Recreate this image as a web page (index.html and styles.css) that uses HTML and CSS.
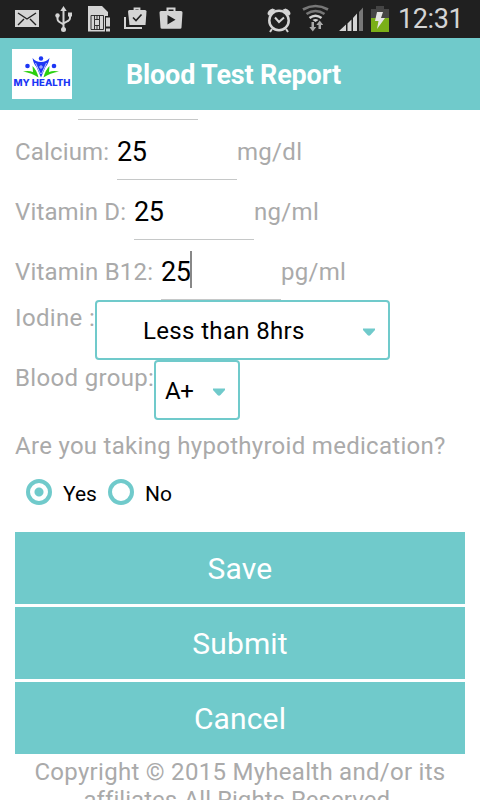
FILE: index.html
```html
<!DOCTYPE html>
<html lang="en">
<head>
<meta charset="utf-8">
<title>Blood Test Report</title>
<link rel="stylesheet" href="styles.css">
</head>
<body>
<div class="status">
<svg class="status-icons" width="392" height="38" viewBox="0 0 392 38" aria-hidden="true">
  <g fill="#d4d4d4">
    <path d="M15 10h24v17H15z"/>
    <path d="M18 13l9 6 9-6M18 25l6-6M36 25l-6-6" fill="none" stroke="#202020" stroke-width="1.4"/>
    <path d="M63.500 6l3.200 5h-6.400z"/><circle cx="63.500" cy="29.500" r="2.500"/><circle cx="57.500" cy="15.500" r="2.200"/><path d="M68 12.500h4v4h-4z"/>
    <path d="M63.500 9v20M57.500 15v4q0 2 2 3l4 2.500M70 15v3q0 2-2 3l-4.500 2.500" fill="none" stroke="#d4d4d4" stroke-width="2"/>
    <path d="M88 6h14l6 6v4h-3v15.500H88z"/>
    <path d="M91 15.500h12.500v14H91zM94.500 19.500v6h5v-6zM94.500 15.500v4M99.500 15.500v4M94.500 25.500v4M99.500 25.500v4M97 15.500v4M97 25.500v4" fill="none" stroke="#202020" stroke-width=".9"/>
    <path d="M106 17.500h4v9h-4zM106 28.500h4v3h-4z"/>
    <path d="M128 11.500q0-1.500 1.500-1.500h15.500q1.500 0 1.500 1.500L145.500 25h-16z"/><path d="M134.500 11V8.500h5V11" fill="none" stroke="#d4d4d4" stroke-width="1.800"/>
    <path d="M124 17h2v10h16v2h-18z"/><path d="M133 17.500l3 3 5.500-6" fill="none" stroke="#202020" stroke-width="1.600"/>
    <path d="M159.500 12.500q0-1.500 1.500-1.500h20q1.500 0 1.500 1.500l-1 15q0 1.200-1.500 1.200h-18q-1.500 0-1.500-1.200z"/><path d="M167.500 12V8.500h7V12" fill="none" stroke="#d4d4d4" stroke-width="2"/><path d="M167.500 15v9.500l8-4.700z" fill="#202020"/>
    <path d="M267.500 14q0-4 5-5.500l3 1.200-6.500 6zM290.500 14q0-4-5-5.500l-3 1.200 6.500 6z"/>
  </g>
  <circle cx="279" cy="20.500" r="9.700" fill="none" stroke="#d4d4d4" stroke-width="2.500"/>
  <path d="M275 17.500l4 4.500 5-4.500M272 29l-2 3M286 29l2 3" fill="none" stroke="#d4d4d4" stroke-width="2"/>
  <path d="M303 9.500q12.500-7 25 0M306.500 14q9-6 18 0" fill="none" stroke="#777" stroke-width="2.700"/>
  <path d="M309.500 18q6-4.500 12 0" fill="none" stroke="#d4d4d4" stroke-width="2.500"/><path d="M312.500 20q3-2 6 0l-3 2z" fill="#d4d4d4"/>
  <path d="M311.500 22h2.500v5h2.200l-3.400 4.500-3.500-4.500h2.200zM318.500 29h2.500v-4h2.200l-3.500-4.500-3.400 4.500h2.200z" fill="#aaa"/>
  <path d="M339 31l7-6.500V31zM347.500 23.500l4-4V31h-4zM353 18l4-4.500V31h-4z" fill="#d4d4d4"/><path d="M359 12l4-4.500V31h-4z" fill="#777"/>
  <path d="M371 9h5V6h8v3h5v9h-18z" fill="#454545"/><path d="M371 18h18v14h-18z" fill="#7aaf18"/>
  <path d="M377 12h6l-2 6h4l-8 11 1.500-8H375z" fill="#e4e4e4"/>
</svg>
<span class="clock">12:31</span>
</div>
<header class="header">
<div class="logo">
<svg width="60" height="22" viewBox="0 0 60 22" aria-hidden="true">
  <path d="M11 15.500q6-1 10 .5l-.5-6q4.500 4.500 6 11.500Q20 17 11 15.500zM47 15.500q-6-1-10 .5l.5-6q-4.500 4.500-6 11.500Q38 17 47 15.500z" fill="#2bd010"/>
  <path d="M20.500 2q3 4 8.500 4t8.500-4q-1 6-4 9L29 21.500 24.500 11q-3-3-4-9z" fill="#1c36f5"/>
  <circle cx="29" cy="2.500" r="2.200" fill="#1c36f5"/><circle cx="15.500" cy="10" r="2.300" fill="#1c36f5"/><circle cx="42" cy="10" r="2.300" fill="#1c36f5"/>
  <path d="M29 9v4M27 11h4M23.500 7l5 11M34.500 7l-5 11" fill="none" stroke="#dfe5ff" stroke-width=".8"/>
</svg>
<span class="logo-name">MY HEALTH</span>
</div>
<h1 class="title">Blood Test Report</h1>
</header>
<main class="form">
<div class="previous-line"></div>
<div class="row"><label class="calcium">Calcium:</label><span class="field">25</span><span class="unit">mg/dl</span></div>
<div class="row"><label class="vitamin-d">Vitamin D:</label><span class="field">25</span><span class="unit">ng/ml</span></div>
<div class="row"><label class="vitamin-b">Vitamin B12:</label><span class="field">25<i class="caret"></i></span><span class="unit">pg/ml</span></div>
<div class="row choice"><label class="iodine">Iodine :</label><div class="select wide"><span>Less than 8hrs</span><svg width="14" height="9" viewBox="0 0 14 9"><path d="M1 .5h12v1.500L8.500 7Q7 8.500 5.500 7L1 2z" fill="#70cacb"/></svg></div></div>
<div class="row choice"><label class="group">Blood group:</label><div class="select small"><span>A+</span><svg width="14" height="9" viewBox="0 0 14 9"><path d="M1 .5h12v1.500L8.500 7Q7 8.500 5.500 7L1 2z" fill="#70cacb"/></svg></div></div>
<p class="question">Are you taking hypothyroid medication?</p>
<div class="radios"><span class="radio on"></span><span class="yes">Yes</span><span class="radio"></span><span class="no">No</span></div>
<div class="actions"><div class="button">Save</div><div class="button">Submit</div><div class="button">Cancel</div></div>
<footer class="footer"><div class="copy">Copyright © 2015 Myhealth and/or its</div><div class="rights">affiliates.All Rights Reserved.</div></footer>
</main>
</body>
</html>
```
FILE: styles.css
```css
* { box-sizing: border-box; }
body { margin: 0; width: 480px; height: 800px; overflow: hidden; background: #fff; font-family: Roboto, sans-serif; font-size: 24px; color: #aaa; white-space: nowrap; }
.status { height: 38px; display: flex; background: #202020; }
.status-icons { flex: none; }
.clock { margin-left: 6px; color: #d4d4d4; font-size: 27px; line-height: 38px; letter-spacing: -.4px; }
.header { height: 72px; display: flex; background: #70cacb; }
.logo { width: 60px; height: 50px; margin: 11px 0 0 12px; padding-top: 7px; background: #fff; text-align: center; }
.logo svg { display: block; }
.logo-name { display: block; width: 60px; color: #1c36f5; font: 800 9.6px/10px Inter, sans-serif; }
.title { margin: 0 0 0 54px; color: #fff; font-size: 27px; line-height: 74px; font-weight: 700; letter-spacing: -.17px; }
.form { padding: 0 15px; }
.previous-line { width: 120px; height: 10px; margin-left: 63px; border-bottom: 1px solid #c6c8c8; }
.row { height: 60px; display: flex; line-height: 64px; }
.row label { flex: none; letter-spacing: .15px; }
.row .calcium { width: 102px; }
.row .vitamin-d { width: 119px; }
.row .vitamin-b { width: 146px; letter-spacing: .2px; }
.unit { letter-spacing: .3px; }
.field { width: 120px; height: 60px; border-bottom: 1px solid #c6c8c8; color: #000; font-size: 27px; line-height: 64px; letter-spacing: -.3px; display: flex; align-items: flex-start; }
.caret { width: 2px; height: 37px; margin-top: 11px; margin-left: -1px; background: #888; }
.choice { line-height: 36px; }
.row .iodine { width: 80px; letter-spacing: .35px; }
.row .group { width: 139px; letter-spacing: .33px; }
.select { height: 60px; border: 2px solid #70cacb; border-radius: 4px; color: #000; display: flex; align-items: center; justify-content: space-between; line-height: 58px; }
.select span { padding-top: 2px; }
.wide { width: 295px; padding: 0 12px 0 46px; letter-spacing: .35px; }
.small { width: 86px; padding: 0 12px 0 9px; letter-spacing: -.5px; }
.select svg { margin-top: 4px; }
.question { margin: 0; height: 52px; line-height: 52px; letter-spacing: .29px; }
.radios { height: 60px; display: flex; align-items: center; color: #000; font-size: 21px; padding: 0 0 0 11px; line-height: 44px; }
.radio { width: 26px; height: 26px; border: 4px solid #70cacb; border-radius: 50%; display: block; margin-top: -20px; }
.on { background: radial-gradient(circle, #70cacb 0 4px, #fff 5px); }
.yes, .no { margin-top: -16px; }
.yes { width: 45px; margin-left: 11px; }
.no { margin-left: 11px; }
.actions { display: grid; gap: 3px; }
.button { height: 72px; background: #70cacb; color: #fff; font-size: 30px; line-height: 74px; text-align: center; letter-spacing: .15px; }
.footer { padding-top: 4px; line-height: 28px; text-align: center; letter-spacing: .28px; }
.rights { letter-spacing: .05px; }
```
